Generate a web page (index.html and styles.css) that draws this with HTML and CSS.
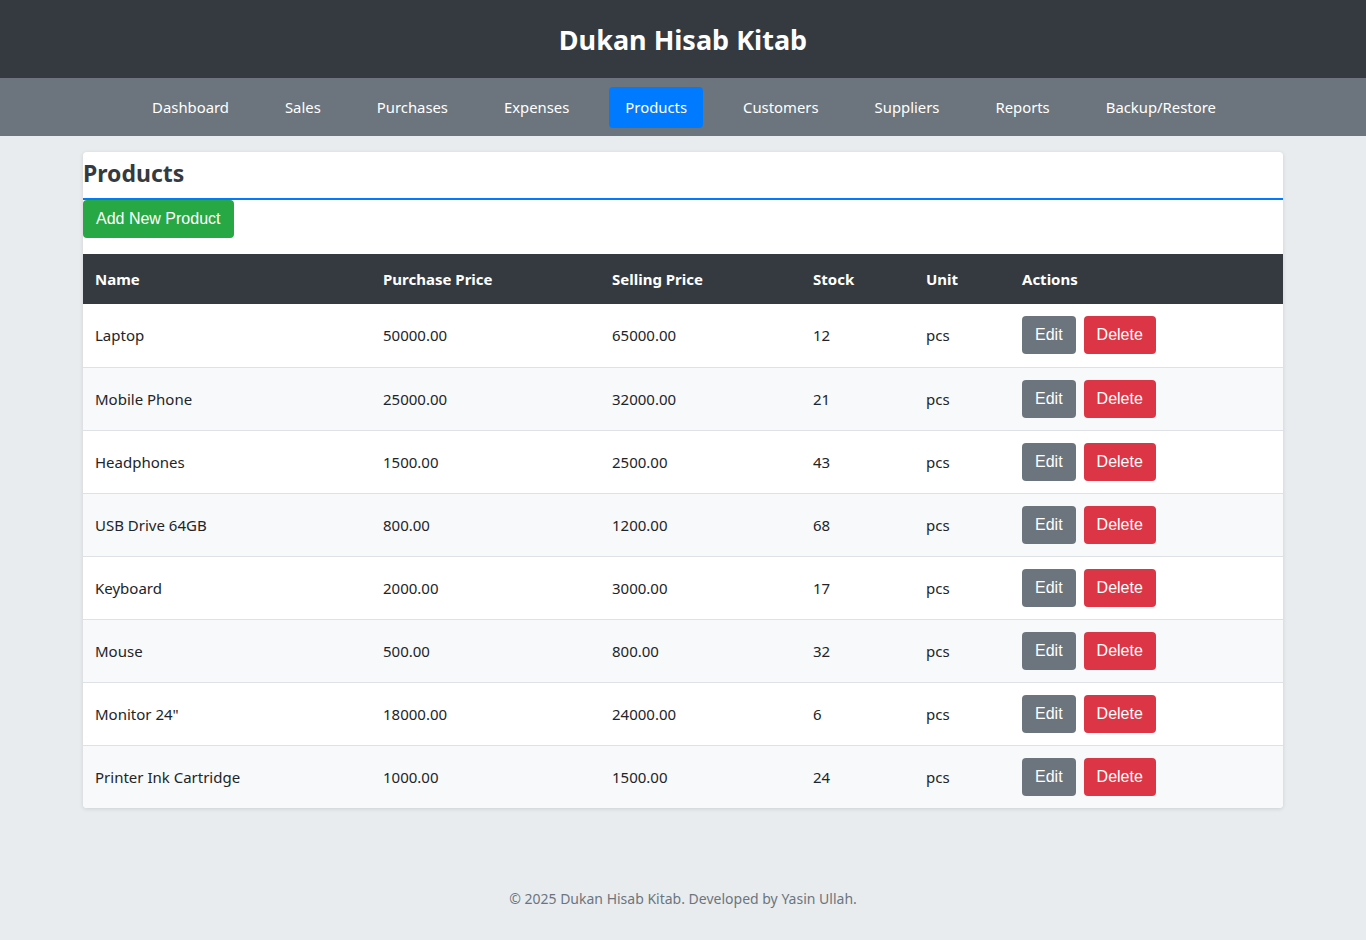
FILE: index.html
```html
<!DOCTYPE html>
<html lang="en">
<head>
<meta charset="utf-8">
<title>Dukan Hisab Kitab - Products</title>
<link rel="stylesheet" href="styles.css">
</head>
<body>
<header class="site-header">
  <h1 class="site-title">Dukan Hisab Kitab</h1>
</header>
<nav class="main-nav">
  <a class="nav-link" href="#">Dashboard</a>
  <a class="nav-link" href="#">Sales</a>
  <a class="nav-link" href="#">Purchases</a>
  <a class="nav-link" href="#">Expenses</a>
  <a class="nav-link active" href="#">Products</a>
  <a class="nav-link" href="#">Customers</a>
  <a class="nav-link" href="#">Suppliers</a>
  <a class="nav-link" href="#">Reports</a>
  <a class="nav-link" href="#">Backup/Restore</a>
</nav>
<main class="container">
  <section class="card">
    <h2 class="card-title">Products</h2>
    <div class="toolbar">
      <button class="btn btn-success">Add New Product</button>
    </div>
    <table class="data-table">
      <colgroup>
        <col class="c-name"><col class="c-pp"><col class="c-sp"><col class="c-stock"><col class="c-unit"><col>
      </colgroup>
      <thead>
        <tr><th>Name</th><th>Purchase Price</th><th>Selling Price</th><th>Stock</th><th>Unit</th><th>Actions</th></tr>
      </thead>
      <tbody>
        <tr><td>Laptop</td><td>50000.00</td><td>65000.00</td><td>12</td><td>pcs</td><td><div class="actions"><button class="btn btn-secondary">Edit</button><button class="btn btn-danger">Delete</button></div></td></tr>
        <tr><td>Mobile Phone</td><td>25000.00</td><td>32000.00</td><td>21</td><td>pcs</td><td><div class="actions"><button class="btn btn-secondary">Edit</button><button class="btn btn-danger">Delete</button></div></td></tr>
        <tr><td>Headphones</td><td>1500.00</td><td>2500.00</td><td>43</td><td>pcs</td><td><div class="actions"><button class="btn btn-secondary">Edit</button><button class="btn btn-danger">Delete</button></div></td></tr>
        <tr><td>USB Drive 64GB</td><td>800.00</td><td>1200.00</td><td>68</td><td>pcs</td><td><div class="actions"><button class="btn btn-secondary">Edit</button><button class="btn btn-danger">Delete</button></div></td></tr>
        <tr><td>Keyboard</td><td>2000.00</td><td>3000.00</td><td>17</td><td>pcs</td><td><div class="actions"><button class="btn btn-secondary">Edit</button><button class="btn btn-danger">Delete</button></div></td></tr>
        <tr><td>Mouse</td><td>500.00</td><td>800.00</td><td>32</td><td>pcs</td><td><div class="actions"><button class="btn btn-secondary">Edit</button><button class="btn btn-danger">Delete</button></div></td></tr>
        <tr><td>Monitor 24"</td><td>18000.00</td><td>24000.00</td><td>6</td><td>pcs</td><td><div class="actions"><button class="btn btn-secondary">Edit</button><button class="btn btn-danger">Delete</button></div></td></tr>
        <tr><td>Printer Ink Cartridge</td><td>1000.00</td><td>1500.00</td><td>24</td><td>pcs</td><td><div class="actions"><button class="btn btn-secondary">Edit</button><button class="btn btn-danger">Delete</button></div></td></tr>
      </tbody>
    </table>
  </section>
</main>
<footer class="site-footer">© 2025 Dukan Hisab Kitab. Developed by Yasin Ullah.</footer>
</body>
</html>
```
FILE: styles.css
```css
* { box-sizing: border-box; }
html, body { margin: 0; padding: 0; }
body {
  background: #e9ecef;
  font-family: "Noto Sans", "Open Sans", sans-serif;
  color: #212529;
  font-size: 15px;
}
.site-header {
  background: #343a40;
  height: 78px;
  display: flex;
  align-items: center;
  justify-content: center;
}
.site-title {
  margin: 0;
  color: #fff;
  font-size: 27px;
  font-weight: 700;
  line-height: 1;
  padding-top: 1px;
}
.main-nav {
  background: #6c757d;
  height: 58px;
  display: flex;
  justify-content: center;
  align-items: center;
  padding-left: 2px;
}
.nav-link {
  color: #fff;
  text-decoration: none;
  font-size: 14.85px;
  line-height: 21px;
  padding: 10px 16px;
  margin: 0 12px;
  border-radius: 4px;
}
.nav-link.active { background: #007bff; }
.container {
  width: 1200px;
  margin: 16px auto 0;
}
.card {
  background: #fff;
  border-radius: 4px;
  box-shadow: 0 1px 4px rgba(0,0,0,0.12);
  overflow: hidden;
}
.card-title {
  margin: 0;
  font-size: 23px;
  font-weight: 700;
  color: #343a40;
  line-height: 32px;
  padding: 5px 1px 9px 0;
  border-bottom: 2px solid #007bff;
}
.toolbar { padding: 0 0 16px; }
.btn {
  font-family: "Liberation Sans", Arial, sans-serif;
  font-size: 16px;
  line-height: 18px;
  color: #fff;
  border: 0;
  border-radius: 4px;
  padding: 10px 13px;
  cursor: pointer;
}
.btn-success { background: #28a745; }
.btn-secondary { background: #6c757d; }
.btn-danger { background: #dc3545; }
.data-table {
  width: 100%;
  border-collapse: collapse;
  table-layout: fixed;
}
.c-name { width: 288px; }
.c-pp { width: 229px; }
.c-sp { width: 201px; }
.c-stock { width: 113px; }
.c-unit { width: 96px; }
.data-table th {
  background: #343a40;
  color: #fff;
  text-align: left;
  font-weight: 700;
  font-size: 15px;
  line-height: 24px;
  padding: 13px 12px;
}
.data-table td {
  font-size: 15px;
  line-height: 24px;
  padding: 12px 12px;
  height: 63px;
  border-bottom: 1px solid #dee2e6;
  vertical-align: middle;
}
.data-table tbody tr:nth-child(even) td { background: #f8f9fa; }
.data-table tbody tr:last-child td { border-bottom: 0; }
.actions { display: flex; gap: 8px; align-items: center; }
.site-footer {
  text-align: center;
  color: #6c757d;
  font-size: 14px;
  margin-top: 81px;
  line-height: 20px;
}
```
